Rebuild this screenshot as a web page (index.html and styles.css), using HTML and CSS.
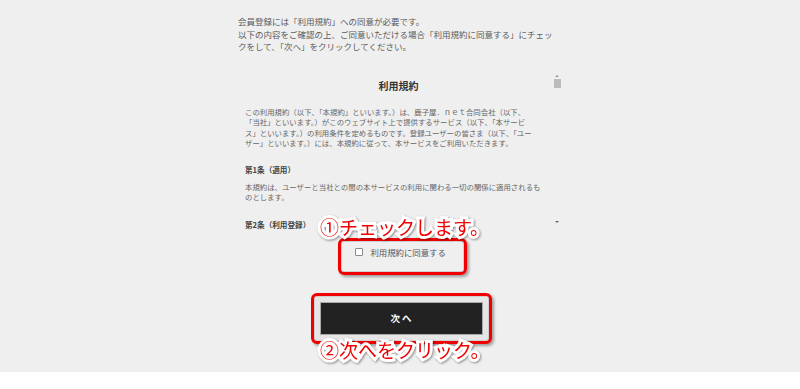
FILE: index.html
```html
<!DOCTYPE html>
<html lang="ja">
<head>
    <meta charset="UTF-8">
    <meta name="viewport" content="width=device-width, initial-scale=1.0">
    <title>会員登録</title>
    <link rel="stylesheet" href="styles.css">
</head>
<body>
    <div class="page">
        <div class="wrap">
            <p class="intro">会員登録には「利用規約」への同意が必要です。<br>以下の内容をご確認の上、ご同意いただける場合「利用規約に同意する」にチェックをして、「次へ」をクリックしてください。</p>

            <div class="terms">
                <div class="terms-body">
                    <h2 class="terms-title">利用規約</h2>
                    <p class="terms-text">この利用規約（以下、「本規約」といいます。）は、鹿子屋．ｎｅｔ合同会社（以下、「当社」といいます。）がこのウェブサイト上で提供するサービス（以下、「本サービス」といいます。）の利用条件を定めるものです。登録ユーザーの皆さま（以下、「ユーザー」といいます。）には、本規約に従って、本サービスをご利用いただきます。</p>
                    <h3 class="article">第1条（適用）</h3>
                    <p class="article-text">本規約は、ユーザーと当社との間の本サービスの利用に関わる一切の関係に適用されるものとします。</p>
                    <h3 class="article second">第2条（利用登録）</h3>
                </div>
                <div class="scrollbar">
                    <span class="arrow up"></span>
                    <span class="thumb"></span>
                    <span class="arrow down"></span>
                </div>
            </div>

            <div class="agree-row">
                <div class="frame agree-frame">
                    <label class="agree"><span class="box"></span>利用規約に同意する</label>
                </div>
                <div class="note note-check">①チェックします。</div>
            </div>

            <div class="next-row">
                <div class="frame next-frame">
                    <button type="button" class="next">次 へ</button>
                </div>
                <div class="note note-next">②次へをクリック。</div>
            </div>
        </div>
    </div>
</body>
</html>
```

FILE: styles.css
```css
body {
    margin: 0;
    background-color: #ffffff;
    font-family: "Noto Sans CJK JP", "Noto Sans", sans-serif;
    color: #555;
}
.page {
    height: 372px;
    background-color: #efefef;
    padding-top: 15px;
    box-sizing: border-box;
}
.wrap {
    width: 324px;
    margin-left: 238px;
}
.intro {
    margin: 0;
    width: 317px;
    font-size: 8.5px;
    line-height: 12.5px;
    color: #5a5a5a;
}
.terms {
    display: flex;
    margin: 15px 0 0 7px;
    width: 317px;
    height: 164px;
    overflow: hidden;
}
.terms-body {
    flex: 1;
    padding-top: 11px;
}
.terms-title {
    margin: 0;
    text-align: center;
    font-size: 10px;
    line-height: 14px;
    color: #333;
}
.terms-text {
    margin: 14px 0 0;
    font-size: 7.4px;
    line-height: 10.5px;
    color: #666;
    padding-right: 20px;
}
.article {
    margin: 15px 0 0;
    font-size: 7.6px;
    line-height: 12px;
    color: #444;
}
.article.second {
    margin-top: 17px;
}
.article-text {
    margin: 6px 0 0;
    font-size: 7.4px;
    line-height: 10px;
    color: #666;
    padding-right: 8px;
}
.scrollbar {
    width: 10px;
    display: flex;
    flex-direction: column;
    align-items: center;
    padding-top: 7px;
}
.arrow {
    width: 0;
    height: 0;
    border-left: 2px solid transparent;
    border-right: 2px solid transparent;
}
.arrow.up {
    border-bottom: 2px solid #999;
}
.arrow.down {
    border-top: 2px solid #666;
    margin-top: 133px;
}
.thumb {
    width: 7px;
    height: 9px;
    margin-top: 2px;
    background-color: #bcbcbc;
}
.agree-row, .next-row {
    position: relative;
    display: flex;
    justify-content: center;
}
.agree-row {
    margin-top: 6px;
    padding-left: 4px;
}
.frame {
    border: 3px solid #f00000;
    border-radius: 6px;
    box-shadow: 2px 2px 3px rgba(0, 0, 0, 0.35), inset 0 0 0 1px #cfcfcf;
}
.agree-frame {
    width: 109px;
    height: 31px;
    display: flex;
    align-items: center;
    padding-left: 14px;
}
.agree-frame .agree {
    display: flex;
    align-items: center;
    font-size: 8.4px;
    color: #555;
    margin-top: -8px;
}
.box {
    width: 6px;
    height: 6px;
    border: 1px solid #8a8a8a;
    border-radius: 1px;
    background-color: #fff;
    margin-right: 8px;
}
.next-row {
    margin-top: 18px;
    padding-left: 2px;
}
.next-frame {
    padding: 6px;
    background-color: #e6e6e6;
}
.next {
    display: block;
    width: 163px;
    height: 33px;
    border: 1px solid #aaa;
    background-color: #222;
    color: #fff;
    font-family: "Noto Sans CJK JP", sans-serif;
    font-weight: bold;
    font-size: 9.5px;
    cursor: pointer;
}
.note {
    position: absolute;
    font-size: 19px;
    line-height: 24px;
    color: #f00000;
    white-space: nowrap;
    -webkit-text-stroke: 6px #ffffff;
    paint-order: stroke fill;
    filter: drop-shadow(1px 1px 1px rgba(0, 0, 0, 0.4));
}
.note-check {
    left: 82px;
    top: -23px;
}
.note-next {
    left: 82px;
    top: 45px;
}
```
